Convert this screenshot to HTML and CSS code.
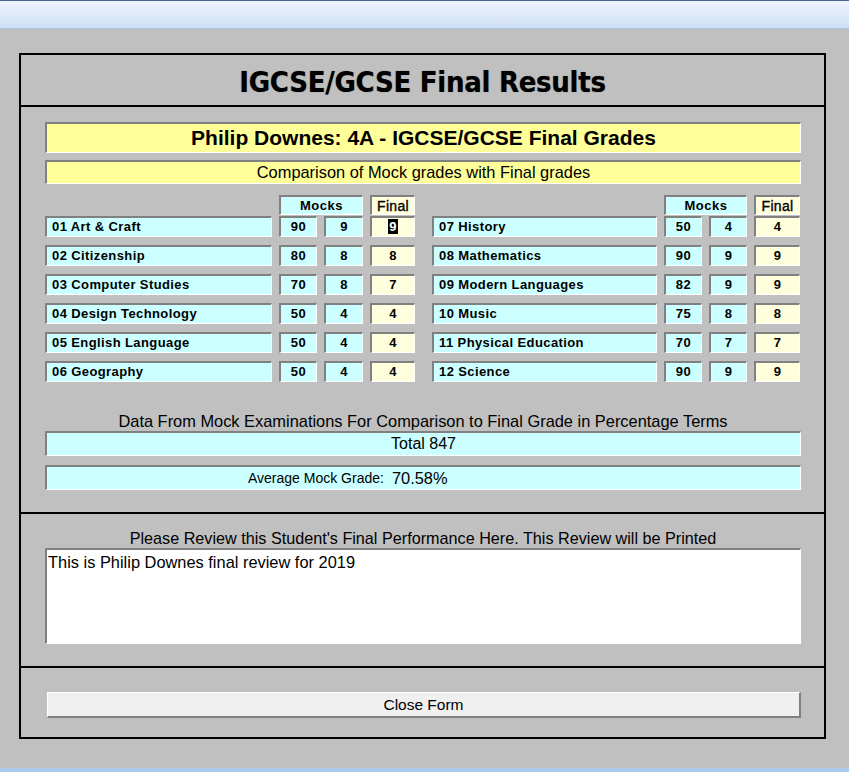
FILE: index.html
```html
<!DOCTYPE html>
<html>
<head>
<meta charset="utf-8">
<link rel="stylesheet" href="styles.css">
</head>
<body>
<div class="titlebar"></div>
<div class="frame">
  <div class="sec sec-title">
    <h1 class="title">IGCSE/GCSE Final Results</h1>
  </div>
  <div class="sec sec-grades">
    <div class="field yellow name">Philip Downes: 4A - IGCSE/GCSE Final Grades</div>
    <div class="field yellow compare">Comparison of Mock grades with Final grades</div>
    <div class="groups">
      <div class="group left">
        <div class="ghead">
          <div class="field cyan hcell mocks">Mocks</div>
          <div class="field cream hcell final-h">Final</div>
        </div>
        <div class="gbody">
          <div class="field cyan subj">01 Art &amp; Craft</div><div class="field cyan num">90</div><div class="field cyan num">9</div><div class="field cream num"><span class="sel">9</span></div>
          <div class="field cyan subj">02 Citizenship</div><div class="field cyan num">80</div><div class="field cyan num">8</div><div class="field cream num">8</div>
          <div class="field cyan subj">03 Computer Studies</div><div class="field cyan num">70</div><div class="field cyan num">8</div><div class="field cream num">7</div>
          <div class="field cyan subj">04 Design Technology</div><div class="field cyan num">50</div><div class="field cyan num">4</div><div class="field cream num">4</div>
          <div class="field cyan subj">05 English Language</div><div class="field cyan num">50</div><div class="field cyan num">4</div><div class="field cream num">4</div>
          <div class="field cyan subj">06 Geography</div><div class="field cyan num">50</div><div class="field cyan num">4</div><div class="field cream num">4</div>
        </div>
      </div>
      <div class="group right">
        <div class="ghead">
          <div class="field cyan hcell mocks">Mocks</div>
          <div class="field cream hcell final-h">Final</div>
        </div>
        <div class="gbody">
          <div class="field cyan subj">07 History</div><div class="field cyan num">50</div><div class="field cyan num">4</div><div class="field cream num">4</div>
          <div class="field cyan subj">08 Mathematics</div><div class="field cyan num">90</div><div class="field cyan num">9</div><div class="field cream num">9</div>
          <div class="field cyan subj">09 Modern Languages</div><div class="field cyan num">82</div><div class="field cyan num">9</div><div class="field cream num">9</div>
          <div class="field cyan subj">10 Music</div><div class="field cyan num">75</div><div class="field cyan num">8</div><div class="field cream num">8</div>
          <div class="field cyan subj">11 Physical Education</div><div class="field cyan num">70</div><div class="field cyan num">7</div><div class="field cream num">7</div>
          <div class="field cyan subj">12 Science</div><div class="field cyan num">90</div><div class="field cyan num">9</div><div class="field cream num">9</div>
        </div>
      </div>
    </div>
    <div class="caption data-cap">Data From Mock Examinations For Comparison to Final Grade in Percentage Terms</div>
    <div class="field cyan total">Total 847</div>
    <div class="field cyan avg"><span class="avg-label">Average Mock Grade:</span><span class="avg-val">70.58%</span></div>
  </div>
  <div class="sec sec-review">
    <div class="caption review-cap">Please Review this Student's Final Performance Here. This Review will be Printed</div>
    <div class="field review">This is Philip Downes final review for 2019</div>
  </div>
  <div class="sec sec-btn">
    <div class="button">Close Form</div>
  </div>
</div>
<div class="bottombar"></div>
</body>
</html>
```
FILE: styles.css
```css
html, body {
  margin: 0;
  padding: 0;
}
body {
  width: 849px;
  height: 772px;
  background: #c0c0c0;
  font-family: "Liberation Sans", Arial, sans-serif;
  color: #000;
  overflow: hidden;
  position: relative;
}
.titlebar {
  height: 27px;
  border-top: 1px solid #4a6690;
  border-bottom: 1px solid #a9c4ea;
  background: linear-gradient(#eef4fc 0%, #e0ebf9 45%, #cddef5 100%);
}
.frame {
  box-sizing: border-box;
  width: 807px;
  margin: 24px 0 0 19px;
  border: 2px solid #000;
}
.sec + .sec {
  border-top: 2px solid #000;
}
.sec-title {
  height: 50px;
  display: flex;
  align-items: center;
  justify-content: center;
}
.title {
  margin: 4px 0 0 0;
  font-family: "DejaVu Sans Condensed", "DejaVu Sans", sans-serif;
  font-stretch: condensed;
  font-weight: bold;
  font-size: 29px;
  line-height: 1;
  letter-spacing: -0.3px;
  color: #000;
  text-shadow: 0 0 1px #666;
}
.sec-grades {
  height: 407px;
  box-sizing: border-box;
  padding: 15px 0 0 24px;
}
.field {
  box-sizing: border-box;
  border-style: solid;
  border-width: 2px 1px 1px 2px;
  border-color: #808080 #ffffff #ffffff #808080;
}
.yellow { background: #ffff99; }
.cyan { background: #ccffff; }
.cream { background: #ffffdd; }
.name {
  width: 756px;
  height: 31px;
  display: flex;
  align-items: center;
  justify-content: center;
  font-weight: bold;
  font-size: 21px;
}
.compare {
  width: 756px;
  height: 24px;
  margin-top: 7px;
  display: flex;
  align-items: center;
  justify-content: center;
  font-size: 16.4px;
}
.groups {
  display: flex;
  gap: 17px;
  margin-top: 11px;
}
.ghead, .gbody {
  display: grid;
  column-gap: 7px;
}
.left .ghead, .left .gbody {
  grid-template-columns: 227px 38px 39px 45px;
}
.right .ghead, .right .gbody {
  grid-template-columns: 225px 38px 38px 46px;
}
.ghead {
  height: 20px;
  margin-bottom: 1px;
}
.gbody {
  grid-auto-rows: 21px;
  row-gap: 8px;
}
.hcell {
  display: flex;
  align-items: center;
  justify-content: center;
  font-size: 13px;
}
.mocks {
  grid-column: 2 / 4;
  font-weight: bold;
  letter-spacing: 0.5px;
}
.final-h {
  grid-column: 4;
  font-size: 14px;
  letter-spacing: 0.3px;
  -webkit-text-stroke: 0.35px #000;
}
.subj, .num {
  display: flex;
  align-items: center;
  padding-bottom: 1px;
  font-weight: bold;
  font-size: 13px;
  letter-spacing: 0.4px;
}
.subj {
  padding-left: 5px;
}
.num {
  justify-content: center;
}
.sel {
  background: #000;
  color: #fff;
  padding: 0 1px;
  line-height: 15px;
}
.caption {
  text-align: center;
  font-size: 16.4px;
  line-height: 20px;
}
.data-cap {
  width: 756px;
  margin-top: 29px;
}
.total {
  width: 756px;
  height: 25px;
  display: flex;
  align-items: center;
  justify-content: center;
  font-size: 16px;
}
.avg {
  width: 756px;
  height: 25px;
  margin-top: 9px;
  display: flex;
  align-items: center;
  padding-left: 201px;
}
.avg-label {
  font-size: 14px;
}
.avg-val {
  font-size: 16.4px;
  margin-left: 8px;
}
.sec-review {
  height: 154px;
  box-sizing: border-box;
  padding: 14px 0 0 24px;
}
.review-cap {
  width: 756px;
  font-size: 16.2px;
}
.review {
  width: 756px;
  height: 96px;
  background: #fff;
  font-size: 16.4px;
  line-height: 20px;
  padding: 2px 0 0 1px;
}
.sec-btn {
  height: 71px;
  box-sizing: border-box;
  padding: 24px 0 0 26px;
}
.button {
  box-sizing: border-box;
  width: 754px;
  height: 26px;
  background: #f0f0f0;
  border-style: solid;
  border-width: 1px 2px 2px 1px;
  border-color: #ffffff #808080 #808080 #ffffff;
  display: flex;
  align-items: center;
  justify-content: center;
  font-size: 15.5px;
}
.bottombar {
  position: absolute;
  left: 0;
  right: 0;
  bottom: 0;
  height: 4px;
  background: #aecaee;
}
```
